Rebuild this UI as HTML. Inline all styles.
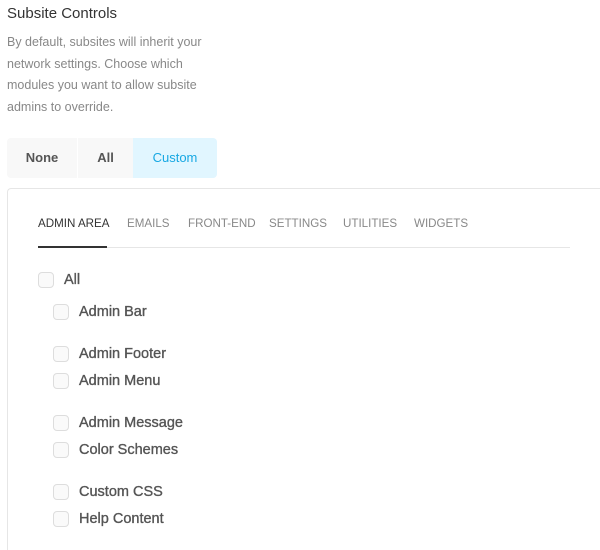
<!DOCTYPE html>
<html><head><style>
html,body{margin:0;width:600px;height:550px;overflow:hidden}
body{background:#fff;font-family:"Liberation Sans",sans-serif;position:relative}
.a{position:absolute;white-space:nowrap}
.t{left:7px;top:5px;font-size:15px;color:#333}
.d{left:7px;top:32px;font-size:12.5px;line-height:21.6px;color:#888}
.btn{position:absolute;top:138px;height:40px;line-height:40px;text-align:center;font-size:13px;font-weight:bold;color:#555;background:#f8f8f8}
.panel{position:absolute;left:7px;top:188px;width:592px;height:362px;border:1px solid #e6e6e6;border-right:none;border-bottom:none;border-radius:4px 0 0 0}
.tab{position:absolute;top:217px;font-size:11.6px;color:#888}
.cb{position:absolute;width:14px;height:14px;border:1px solid #ddd;border-radius:4px;background:#fafafa}
.l{position:absolute;font-size:14.5px;color:#555;-webkit-text-stroke:0.35px #555}
</style></head><body>
<div class="a t">Subsite Controls</div>
<div class="a d">By default, subsites will inherit your<br>network settings. Choose which<br>modules you want to allow subsite<br>admins to override.</div>
<div class="btn" style="left:7px;width:70px;border-radius:4px 0 0 4px">None</div>
<div class="btn" style="left:78px;width:55px">All</div>
<div class="btn" style="left:133px;width:84px;background:#e1f6ff;color:#17a8e3;font-weight:normal;border-radius:0 4px 4px 0">Custom</div>
<div class="panel"></div>
<div class="tab" style="left:38px;color:#333">ADMIN AREA</div>
<div class="tab" style="left:127px">EMAILS</div>
<div class="tab" style="left:188px">FRONT-END</div>
<div class="tab" style="left:269px">SETTINGS</div>
<div class="tab" style="left:343px">UTILITIES</div>
<div class="tab" style="left:414px">WIDGETS</div>
<div class="a" style="left:38px;top:247px;width:532px;height:1px;background:#e6e6e6"></div>
<div class="a" style="left:38px;top:246px;width:69px;height:2px;background:#333"></div>
<div class="cb" style="left:38px;top:272px"></div><div class="l" style="left:64px;top:272px">All</div>
<div class="cb" style="left:53px;top:304px"></div><div class="l" style="left:79px;top:304px">Admin Bar</div>
<div class="cb" style="left:53px;top:346px"></div><div class="l" style="left:79px;top:346px">Admin Footer</div>
<div class="cb" style="left:53px;top:373px"></div><div class="l" style="left:79px;top:373px">Admin Menu</div>
<div class="cb" style="left:53px;top:415px"></div><div class="l" style="left:79px;top:415px">Admin Message</div>
<div class="cb" style="left:53px;top:442px"></div><div class="l" style="left:79px;top:442px">Color Schemes</div>
<div class="cb" style="left:53px;top:484px"></div><div class="l" style="left:79px;top:484px">Custom CSS</div>
<div class="cb" style="left:53px;top:511px"></div><div class="l" style="left:79px;top:511px">Help Content</div>
</body></html>
